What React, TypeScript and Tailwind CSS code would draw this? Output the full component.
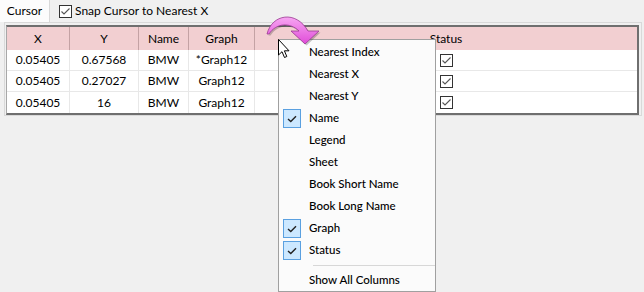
import React from "react";

const font = { fontFamily: 'Lato, "Noto Sans", sans-serif' };

function Check({ className = "" }: { className?: string }) {
  return (
    <svg width="13" height="13" viewBox="0 0 13 13" className={className}>
      <rect x="0.5" y="0.5" width="12" height="12" fill="#fff" stroke="#333" />
      <path d="M2.5 6.5 L5 9 L10.5 3.5" fill="none" stroke="#555" strokeWidth="1.1" />
    </svg>
  );
}

const cols = [
  { w: "w-[63px]", label: "X" },
  { w: "w-[69px]", label: "Y" },
  { w: "w-[50px]", label: "Name" },
  { w: "w-[66px]", label: "Graph" },
];

const rows = [
  ["0.05405", "0.67568", "BMW", "*Graph12"],
  ["0.05405", "0.27027", "BMW", "Graph12"],
  ["0.05405", "16", "BMW", "Graph12"],
];

const menu: [string, boolean][] = [
  ["Nearest Index", false],
  ["Nearest X", false],
  ["Nearest Y", false],
  ["Name", true],
  ["Legend", false],
  ["Sheet", false],
  ["Book Short Name", false],
  ["Book Long Name", false],
  ["Graph", true],
  ["Status", true],
];

function MenuItem({ label, checked }: { label: string; checked: boolean }) {
  return (
    <div className="h-[22px] flex items-center relative">
      {checked && (
        <div className="absolute left-[4px] top-[2px] w-[18px] h-[19px] bg-[#cce8ff] border border-[#5aa0e0] flex items-center justify-center">
          <svg width="10" height="8" viewBox="0 0 10 8">
            <path d="M1 4 L3.8 6.6 L9 1.2" fill="none" stroke="#222" strokeWidth="1.4" />
          </svg>
        </div>
      )}
      <span className="ml-[30px] text-[11.5px] text-black font-medium">{label}</span>
    </div>
  );
}

export default function App() {
  return (
    <div className="w-[644px] h-[292px] bg-[#f0f0f0] relative overflow-hidden text-black" style={font}>
      {/* tab bar */}
      <div className="h-[22px] flex items-stretch">
        <div className="w-[50px] bg-[#fcfcfc] border-r border-[#d9d9d9] flex items-center justify-center text-[12px]">
          Cursor
        </div>
        <div className="flex items-center ml-[9px] gap-[3px]">
          <Check />
          <span className="text-[12px]">Snap Cursor to Nearest X</span>
        </div>
      </div>
      {/* panel */}
      <div className="ml-[4px] w-[638px] h-[94px] border border-[#d9d9d9] bg-[#f0f0f0] pl-[1px] pt-[2px] pr-[2px]">
        <div className="bg-white border-t-2 border-b-2 border-r-2 border-l border-t-[#6f6f6f] border-b-[#6f6f6f] border-r-[#6f6f6f] border-l-[#a8a8a8]">
          <div className="flex h-[23px] bg-[#f2cfd1] text-[12px]">
            {cols.map((c) => (
              <div key={c.label} className={`${c.w} border-r border-[#c4a2a4] flex items-center justify-center`}>
                {c.label}
              </div>
            ))}
            <div className="flex-1 flex items-center justify-center">Status</div>
          </div>
          {rows.map((r, i) => (
            <div key={i} className={`flex h-[21px] text-[12px] ${i < 2 ? "border-b border-[#e8e8e8]" : ""}`}>
              {r.map((v, j) => (
                <div key={j} className={`${cols[j].w} border-r border-[#e8e8e8] flex items-center justify-center`}>
                  {v}
                </div>
              ))}
              <div className="flex-1 flex items-center justify-center">
                <Check />
              </div>
            </div>
          ))}
        </div>
      </div>

      {/* context menu */}
      <div className="absolute left-[278px] top-[39px] w-[158px] h-[253px] bg-[#fbfbfb] border border-[#a0a0a0] pt-[1px]">
        {menu.map(([l, c]) => (
          <MenuItem key={l} label={l} checked={c} />
        ))}
        <div className="h-[8px] flex items-center">
          <div className="ml-[34px] flex-1 h-px bg-[#d7d7d7]" />
        </div>
        <MenuItem label="Show All Columns" checked={false} />
      </div>

      {/* pink curved arrow */}
      <svg className="absolute left-[260px] top-[10px]" width="64" height="40" viewBox="0 0 64 40">
        <defs>
          <linearGradient id="pg" x1="0" y1="0" x2="0" y2="1">
            <stop offset="0" stopColor="#f7a6f2" />
            <stop offset="1" stopColor="#e04cd8" />
          </linearGradient>
        </defs>
        <path
          d="M7 24 C 12 4, 36 0, 48 21 L 59 21 L 45 34 L 31 21 L 39 21 C 30 12, 16 13, 9 24 Z"
          fill="#000"
          opacity="0.22"
          transform="translate(1.5 1.5)"
        />
        <path
          d="M7 24 C 12 4, 36 0, 48 21 L 59 21 L 45 34 L 31 21 L 39 21 C 30 12, 16 13, 9 24 Z"
          fill="url(#pg)"
          stroke="#9a3a92"
          strokeWidth="0.8"
        />
      </svg>

      {/* mouse cursor */}
      <svg className="absolute left-[278px] top-[39px]" width="13" height="20" viewBox="0 0 13 20">
        <path d="M0.5 0.5 L0.5 16 L4 12.7 L6.5 18.5 L8.8 17.5 L6.4 11.8 L11 11.8 Z" fill="#fff" stroke="#000" strokeWidth="1" />
      </svg>
    </div>
  );
}
